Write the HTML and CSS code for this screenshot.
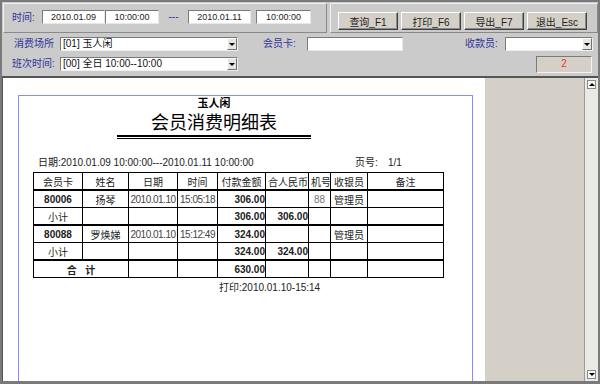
FILE: index.html
```html
<!DOCTYPE html>
<html lang="zh-CN">
<head>
    <meta charset="UTF-8">
    <meta name="viewport" content="width=device-width, initial-scale=1.0">
    <title>会员消费明细表</title>
    <link rel="stylesheet" href="styles.css">
</head>
<body>
    <div class="window">
        <div class="topbar">
            <div class="group time-group">
                <span class="label time-label">时间:</span>
                <span class="field date">2010.01.09</span>
                <span class="field clock">10:00:00</span>
                <span class="dash">---</span>
                <span class="field date">2010.01.11</span>
                <span class="field clock">10:00:00</span>
            </div>
            <div class="group action-group">
                <button type="button">查询_F1</button>
                <button type="button">打印_F6</button>
                <button type="button">导出_F7</button>
                <button type="button">退出_Esc</button>
            </div>
        </div>

        <div class="filters">
            <div class="filter-row first">
                <span class="label place-label">消费场所</span>
                <div class="select wide"><span class="value">[01] 玉人闲</span><i class="drop"></i></div>
                <span class="label card-label">会员卡:</span>
                <div class="field card"></div>
                <span class="label cashier-label">收款员:</span>
                <div class="select narrow"><span class="value"></span><i class="drop"></i></div>
            </div>
            <div class="filter-row second">
                <span class="label shift-label">班次时间:</span>
                <div class="select wide"><span class="value">[00] 全日 10:00--10:00</span><i class="drop"></i></div>
                <div class="counter">2</div>
            </div>
        </div>

        <div class="viewer">
            <div class="preview">
                <div class="page">
                    <div class="report">
                        <div class="head">
                            <div class="shop">玉人闲</div>
                            <div class="title">会员消费明细表</div>
                            <div class="rule"></div>
                        </div>
                        <div class="meta">
                            <span class="range">日期:2010.01.09 10:00:00---2010.01.11 10:00:00</span>
                            <span class="pageno">页号:</span>
                            <span class="pages">1/1</span>
                        </div>
                        <table>
                            <colgroup>
                                <col style="width: 49px">
                                <col style="width: 46px">
                                <col style="width: 49px">
                                <col style="width: 40px">
                                <col style="width: 48px">
                                <col style="width: 43px">
                                <col style="width: 22px">
                                <col style="width: 37px">
                                <col style="width: 76px">
                            </colgroup>
                            <tr class="heading">
                                <th>会员卡</th>
                                <th>姓名</th>
                                <th>日期</th>
                                <th>时间</th>
                                <th>付款金额</th>
                                <th>合人民币</th>
                                <th>机号</th>
                                <th>收银员</th>
                                <th>备注</th>
                            </tr>
                            <tr>
                                <td class="card-no">80006</td>
                                <td class="center">扬琴</td>
                                <td class="stamp">2010.01.10</td>
                                <td class="stamp">15:05:18</td>
                                <td class="money">306.00</td>
                                <td></td>
                                <td class="center grey">88</td>
                                <td class="center">管理员</td>
                                <td></td>
                            </tr>
                            <tr class="subtotal">
                                <td class="center">小计</td>
                                <td></td>
                                <td></td>
                                <td></td>
                                <td class="money">306.00</td>
                                <td class="money">306.00</td>
                                <td></td>
                                <td></td>
                                <td></td>
                            </tr>
                            <tr>
                                <td class="card-no">80088</td>
                                <td class="center">罗焕娣</td>
                                <td class="stamp">2010.01.10</td>
                                <td class="stamp">15:12:49</td>
                                <td class="money">324.00</td>
                                <td></td>
                                <td></td>
                                <td class="center">管理员</td>
                                <td></td>
                            </tr>
                            <tr class="subtotal">
                                <td class="center">小计</td>
                                <td></td>
                                <td></td>
                                <td></td>
                                <td class="money">324.00</td>
                                <td class="money">324.00</td>
                                <td></td>
                                <td></td>
                                <td></td>
                            </tr>
                            <tr class="total">
                                <td colspan="2" class="total-label">合&nbsp;&nbsp;&nbsp;计</td>
                                <td></td>
                                <td></td>
                                <td class="money">630.00</td>
                                <td></td>
                                <td></td>
                                <td></td>
                                <td></td>
                            </tr>
                        </table>
                        <div class="printed">打印:2010.01.10-15:14</div>
                    </div>
                </div>
            </div>
            <div class="side"></div>
            <div class="scroll">
                <span class="arrow up"></span>
                <span class="arrow down"></span>
            </div>
        </div>
    </div>
</body>
</html>
```

FILE: styles.css
```css
body {
    margin: 0;
    background-color: #cbcbcb;
    font-family: "Liberation Sans", "Noto Sans CJK SC", sans-serif;
    font-size: 10px;
    color: #000;
}

.window {
    width: 600px;
    height: 384px;
    box-sizing: border-box;
    border: 2px solid #7a7a7a;
    border-bottom-width: 3px;
    background-color: #cbcbcb;
    display: flex;
    flex-direction: column;
    overflow: hidden;
}

/* top bar: time range + actions */
.topbar {
    display: flex;
    gap: 3px;
    height: 31px;
    padding: 1px 0 0 1px;
    box-sizing: border-box;
}

.group {
    height: 30px;
    box-sizing: border-box;
    border: 1px solid;
    border-color: #f2f2f2 #8a8a8a #8a8a8a #f2f2f2;
    display: flex;
    align-items: center;
}

.time-group {
    width: 324px;
    padding-left: 8px;
}

.label {
    color: #33339a;
    line-height: 14px;
    white-space: nowrap;
}

.time-label {
    width: 30px;
}

.field {
    display: block;
    height: 14px;
    box-sizing: border-box;
    background-color: #fff;
    border: 1px solid;
    border-color: #7a7a7a #e8e8e8 #e8e8e8 #7a7a7a;
    font-size: 9px;
    line-height: 12px;
    text-align: center;
    color: #222;
}

.time-group .field {
    margin-top: -3px;
}

.time-group .date:first-of-type {
    width: 65px;
    margin-right: 3px;
}

.time-group .clock {
    width: 54px;
}

.time-group .date {
    width: 63px;
}

.time-group .clock:last-child {
    width: 55px;
    margin-left: 5px;
}

.dash {
    width: 29px;
    text-align: center;
    color: #33339a;
    margin-top: -3px;
}

.action-group {
    flex: 1;
    padding-left: 7px;
    gap: 3px;
}

.action-group button {
    width: 60px;
    height: 18px;
    margin-top: 6px;
    padding: 0;
    background-color: #d4d0c8;
    border: 1px solid;
    border-color: #fff #404040 #404040 #fff;
    box-shadow: inset -1px -1px 0 #8a8a8a;
    font-family: "Liberation Sans", "Noto Sans CJK SC", sans-serif;
    font-size: 10px;
    color: #222;
}

/* filter rows */
.filters {
    height: 43px;
    box-sizing: border-box;
}

.filter-row {
    display: flex;
    align-items: flex-start;
    height: 14px;
}

.filter-row.first {
    margin-top: 4px;
    padding-left: 12px;
}

.filter-row.second {
    margin-top: 6px;
    padding-left: 10px;
}

.place-label {
    width: 46px;
}

.shift-label {
    width: 48px;
}

.card-label {
    width: 44px;
    margin-left: 25px;
}

.cashier-label {
    width: 40px;
    margin-left: 62px;
}

.field.card {
    width: 96px;
}

.select {
    display: flex;
    height: 14px;
    box-sizing: border-box;
    background-color: #fff;
    border: 1px solid;
    border-color: #7a7a7a #f0f0f0 #f0f0f0 #7a7a7a;
}

.select.wide {
    width: 178px;
}

.select.narrow {
    width: 88px;
}

.select .value {
    flex: 1;
    padding-left: 2px;
    line-height: 12px;
    font-size: 10px;
    white-space: nowrap;
    color: #111;
}

.drop {
    width: 10px;
    height: 12px;
    box-sizing: border-box;
    background-color: #e8e6e0;
    border: 1px solid;
    border-color: #fff #707070 #707070 #fff;
    display: flex;
    align-items: center;
    justify-content: center;
}

.drop::after {
    content: "";
    border-left: 3px solid transparent;
    border-right: 3px solid transparent;
    border-top: 3px solid #000;
}

.counter {
    width: 56px;
    height: 17px;
    margin: -1px 6px 0 auto;
    box-sizing: border-box;
    background-color: #d4d0c8;
    border: 1px solid;
    border-color: #7a7a7a #f4f4f4 #f4f4f4 #7a7a7a;
    color: #f03030;
    text-align: center;
    line-height: 14px;
    font-size: 10px;
}

/* report viewer */
.viewer {
    flex: 1;
    display: flex;
    border-top: 2px solid #555;
    border-left: 1px solid #555;
    min-height: 0;
}

.preview {
    width: 482px;
    background-color: #fff;
    overflow: hidden;
}

.side {
    flex: 1;
    background-color: #d4d0c8;
}

.scroll {
    width: 13px;
    background-color: #ebe9e3;
    border-left: 1px solid #9a9a9a;
    display: flex;
    flex-direction: column;
    justify-content: space-between;
    align-items: center;
    padding: 2px 0 2px;
}

.arrow {
    width: 9px;
    height: 9px;
    box-sizing: border-box;
    background-color: #f6f6f6;
    border: 1px solid #8a8a8a;
    display: flex;
    align-items: center;
    justify-content: center;
}

.arrow::after {
    content: "";
    border-left: 3px solid transparent;
    border-right: 3px solid transparent;
}

.arrow.up::after {
    border-bottom: 3px solid #000;
}

.arrow.down::after {
    border-top: 3px solid #000;
}

.page {
    width: 455px;
    height: 320px;
    margin: 17px 0 0 15px;
    box-sizing: border-box;
    border: 1px solid #8a8aff;
    border-bottom: none;
}

.report {
    padding-left: 14px;
}

.head {
    width: 362px;
    text-align: center;
}

.shop {
    font-weight: bold;
    font-size: 11px;
    line-height: 14px;
}

.title {
    margin-top: 2px;
    font-size: 18px;
    line-height: 23px;
}

.rule {
    width: 194px;
    height: 1px;
    margin: 0 auto;
    border-top: 2px solid #000;
    border-bottom: 1px solid #000;
}

.meta {
    display: flex;
    margin-top: 17px;
    padding-left: 5px;
    line-height: 14px;
    color: #222;
}

.range {
    width: 317px;
}

.pageno {
    width: 33px;
}

table {
    margin-top: 2px;
    width: 410px;
    table-layout: fixed;
    border-collapse: collapse;
    font-size: 10px;
}

th,
td {
    height: 16px;
    padding: 0 2px;
    border: 1px solid #000;
    white-space: nowrap;
    overflow: hidden;
    color: #222;
}

th {
    font-weight: normal;
    text-align: center;
}

.heading th,
.subtotal td {
    border-bottom-width: 2px;
}

.center {
    text-align: center;
}

.stamp {
    padding: 0;
    text-align: center;
    font-size: 10px;
    letter-spacing: -0.5px;
    color: #444;
}

.grey {
    color: #777;
}

.card-no {
    font-weight: bold;
    text-align: center;
}

.money {
    font-weight: bold;
    text-align: right;
    padding-right: 0;
}

.total-label {
    font-weight: bold;
    text-align: center;
}

.printed {
    margin-top: 3px;
    padding-left: 186px;
    line-height: 14px;
    color: #222;
}
```
